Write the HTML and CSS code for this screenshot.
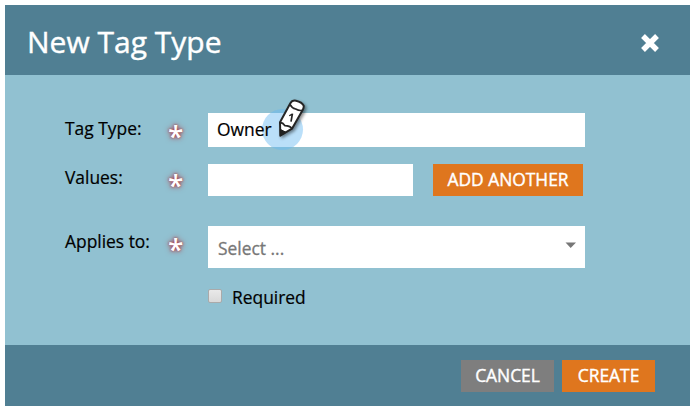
FILE: index.html
```html
<!DOCTYPE html>
<html lang="en">
<head>
<meta charset="utf-8">
<title>New Tag Type</title>
<link rel="stylesheet" href="styles.css">
</head>
<body>
<section class="dialog">
  <header class="dialog-header">
    <h1>New Tag Type</h1>
    <button class="close" aria-label="Close"><svg width="20" height="20" viewBox="0 0 20 20"><path d="M3 3L17 17M17 3L3 17"/></svg></button>
  </header>
  <form class="dialog-body">
    <div class="row row-type">
      <label class="label-type" for="type">Tag Type:</label><span class="star">*</span>
      <div class="field"><span class="halo"></span><input id="type" class="input-type" type="text" value="Owner">
        <svg class="marker" width="70" height="70" viewBox="0 0 210 210">
          <g class="pencil">
            <path class="shell" d="M91 137L90 97L121 40Q126 30 138 32Q156 36 161 47Q162 52 158 60L126 116Z"/>
            <path class="tip" d="M91 118L91 137L108 127Z"/>
            <path class="line" d="M120 43Q125 54 137 57Q148 63 156 61M90 97Q99 98 105 107Q119 107 126 116"/>
            <text x="114" y="95" transform="rotate(10 123 82)">1</text>
          </g>
        </svg>
      </div>
    </div>
    <div class="row row-values">
      <label class="label-values" for="values">Values:</label><span class="star">*</span>
      <input id="values" class="input-values" type="text"><button type="button" class="btn btn-add"><span>ADD ANOTHER</span></button>
    </div>
    <div class="row row-applies">
      <label class="label-applies">Applies to:</label><span class="star">*</span>
      <div class="select"><span>Select ...</span><svg width="12" height="7" viewBox="0 0 12 7"><path d="M.5 .5H11L5.7 6Z"/></svg></div>
    </div>
    <label class="required"><i class="box"></i><span>Required</span></label>
  </form>
  <footer class="dialog-footer">
    <button class="btn btn-cancel"><span>CANCEL</span></button>
    <button class="btn btn-create"><span>CREATE</span></button>
  </footer>
</section>
</body>
</html>
```
FILE: styles.css
```css
* { box-sizing: border-box; }
body { margin: 0; padding: 5px; background: #fff; font-family: "Open Sans", sans-serif; font-size: 17.4px; color: #000; overflow: hidden; }
button, input { font: inherit; border: 0; border-radius: 0; padding: 0; margin: 0; outline: 0; }
.dialog { width: 685px; height: 401px; background: #91c1d1; display: flex; flex-direction: column; }
.dialog-header { height: 70px; background: #507f93; display: flex; align-items: center; justify-content: space-between; padding: 0 30px 0 22px; }
h1 { margin: 0; font-size: 30px; font-weight: 400; line-height: 40px; color: #fff; padding-top: 3px; -webkit-text-stroke: .4px #fff; }
.close { width: 20px; height: 20px; margin-top: 6px; background: none; }
.close svg { display: block; }
.close path { stroke: #fff; stroke-width: 5.4; fill: none; }
.dialog-body { flex: 1; padding: 38px 105px 0 60px; }
.row { display: flex; }
.row label { width: 103px; line-height: 24px; white-space: nowrap; -webkit-text-stroke: .2px #000; }
.row-type { height: 51px; }
.row-type label { padding-top: 3px; }
.row-values { height: 62px; }
.row-values label { padding-top: 1px; }
.row-applies { height: 60px; }
.row-applies label { padding-top: 3px; }
.star { width: 40px; padding-top: 3px; font-size: 28px; line-height: 40px; font-weight: 600; color: #fff; text-shadow: 0 0 2px #a83c46, 0 0 4px #a8505a, 0 0 6px #a86a74; }
.row-values .star { padding-top: 1px; }
.field { position: relative; width: 377px; height: 34px; background: #fff; }
.halo { position: absolute; left: 54px; top: -4px; width: 41px; height: 41px; border-radius: 50%; background: rgba(101, 185, 242, .45); }
.input-type { position: relative; display: block; width: 377px; height: 34px; padding: 0 9px 2px; background: transparent; color: #000; -webkit-text-stroke: .2px #000; }
.marker { position: absolute; left: 42px; top: -23px; }
.pencil { filter: drop-shadow(5px 5px 4px rgba(0, 0, 0, .45)); }
.shell { fill: #fff; stroke: #252525; stroke-width: 6; stroke-linejoin: round; }
.tip { fill: #222; stroke: #222; stroke-width: 3; }
.line { fill: none; stroke: #252525; stroke-width: 5; }
.pencil text { font: 700 34px "Open Sans", sans-serif; fill: #222; }
.input-values { width: 205px; height: 32px; background: #fff; }
.btn { height: 32px; padding-bottom: 2px; color: #fff; line-height: 30px; white-space: nowrap; -webkit-text-stroke: .4px #fff; }
.btn-add { width: 150px; margin-left: 20px; background: #df761e; }
.select { width: 377px; height: 42px; background: #fff; color: #777; padding: 2px 8px 0 10px; display: flex; align-items: center; justify-content: space-between; -webkit-text-stroke: .3px #777; }
.select svg { margin-top: -6px; }
.select path { fill: #777; }
.required { display: flex; align-items: center; height: 22px; margin-left: 143px; -webkit-text-stroke: .2px #000; }
.box { width: 14px; height: 14px; margin: -2px 10px 0 0; border: 1px solid #aaa; border-radius: 2px; background: linear-gradient(#e9e9e9, #d9d9d9); }
.dialog-footer { height: 61px; background: #507f93; display: flex; justify-content: flex-end; gap: 8px; padding: 15px 35px 0 0; }
.btn-cancel { width: 93px; background: #7e7e7e; }
.btn-create { width: 93px; background: #df761e; }
```
